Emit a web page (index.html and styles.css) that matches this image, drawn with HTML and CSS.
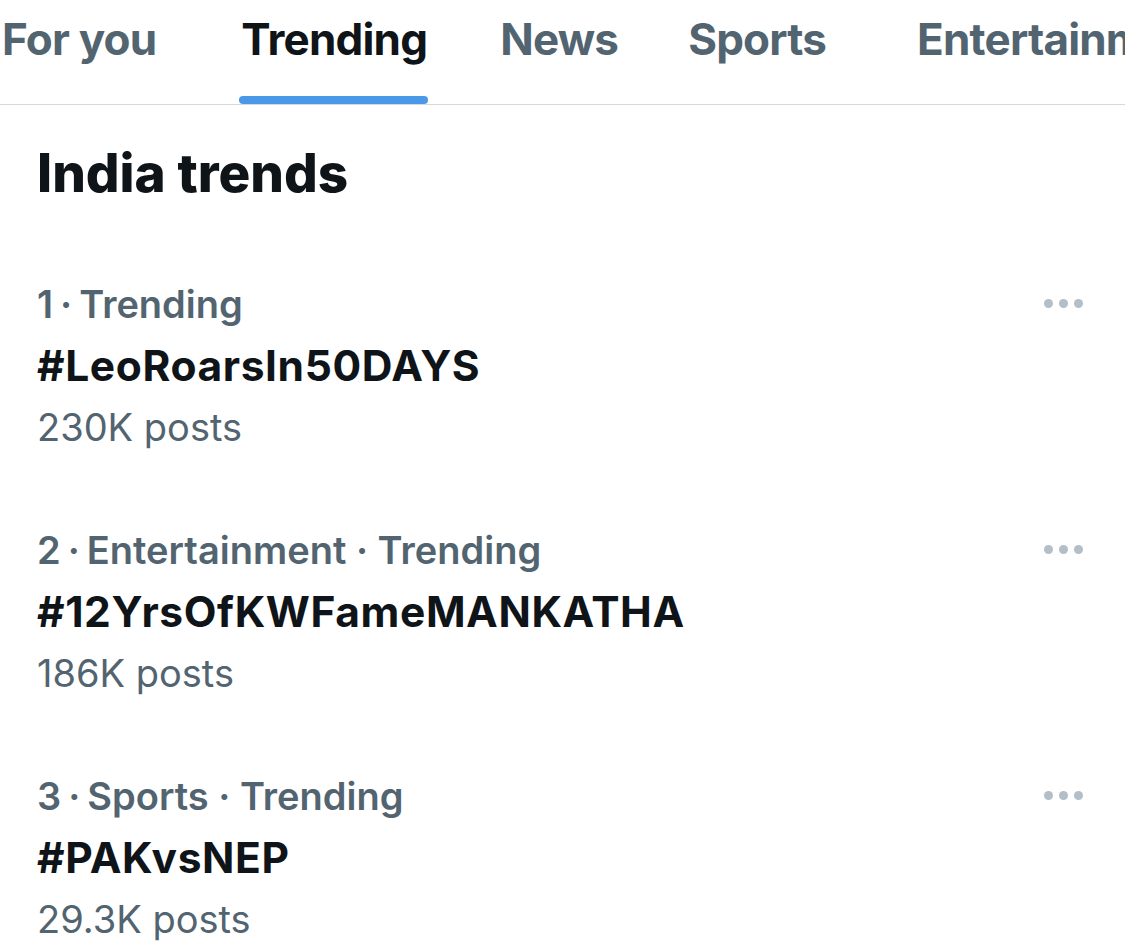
FILE: index.html
```html
<!DOCTYPE html>
<html lang="en">
<head>
<meta charset="utf-8">
<title>Trending</title>
<link rel="stylesheet" href="styles.css">
</head>
<body>
<nav class="tabs">
  <div class="tab tab-foryou">For you</div>
  <div class="tab tab-active">Trending<span class="indicator"></span></div>
  <div class="tab tab-news">News</div>
  <div class="tab tab-sports">Sports</div>
  <div class="tab tab-ent">Entertainment</div>
</nav>
<main class="content">
  <h1 class="heading">India trends</h1>
  <section class="trend">
    <div class="trend-text">
      <div class="meta">1<span class="num-sep">·</span>Trending</div>
      <div class="title">#LeoRoarsIn50DAYS</div>
      <div class="count">230K posts</div>
    </div>
    <div class="more"><span></span><span></span><span></span></div>
  </section>
  <section class="trend">
    <div class="trend-text">
      <div class="meta">2<span class="num-sep">·</span>Entertainment · Trending</div>
      <div class="title">#12YrsOfKWFameMANKATHA</div>
      <div class="count">186K posts</div>
    </div>
    <div class="more"><span></span><span></span><span></span></div>
  </section>
  <section class="trend">
    <div class="trend-text">
      <div class="meta">3<span class="num-sep">·</span>Sports · Trending</div>
      <div class="title">#PAKvsNEP</div>
      <div class="count">29.3K posts</div>
    </div>
    <div class="more"><span></span><span></span><span></span></div>
  </section>
</main>
</body>
</html>
```

FILE: styles.css
```css
html, body {
  margin: 0;
  padding: 0;
  background: #ffffff;
}
body {
  width: 1125px;
  height: 949px;
  overflow: hidden;
  font-family: Inter, "Noto Sans", "Liberation Sans", sans-serif;
  color: #0f1419;
}
.tabs {
  display: flex;
  height: 104px;
  border-bottom: 1.5px solid #d4d9dc;
  padding-left: 2px;
  white-space: nowrap;
  overflow: hidden;
}
.tab {
  position: relative;
  flex-shrink: 0;
  font-size: 44px;
  font-weight: 700;
  line-height: 56px;
  padding-top: 11px;
  color: #536471;
  letter-spacing: -0.8px;
}
.tab-active {
  color: #0f1419;
  margin-left: 85px;
}
.tab-news { margin-left: 73px; }
.tab-sports { margin-left: 70px; }
.tab-ent { margin-left: 91px; }
.indicator {
  position: absolute;
  left: -2px;
  right: -1px;
  top: 96px;
  height: 8px;
  border-radius: 4px;
  background: #4a99e9;
}
.content {
  padding: 0 0 0 37px;
}
.heading {
  margin: 37px 0 0 0;
  font-size: 53px;
  line-height: 62px;
  font-weight: 800;
  letter-spacing: 0;
}
.trend {
  display: flex;
  justify-content: space-between;
  align-items: flex-start;
  padding-right: 42px;
}
.trend:first-of-type {
  margin-top: 77px;
}
.trend + .trend {
  margin-top: 77px;
}
.meta {
  font-size: 38px;
  line-height: 46px;
  font-weight: 600;
  color: #536471;
  letter-spacing: 0;
}
.num-sep {
  display: inline-block;
  margin: 0 7px;
}
.title {
  margin-top: 14px;
  font-size: 42.5px;
  line-height: 50px;
  font-weight: 700;
  color: #0f1419;
  letter-spacing: 0.6px;
}
.count {
  margin-top: 13px;
  font-size: 38px;
  line-height: 46px;
  font-weight: 400;
  color: #536471;
}
.more {
  display: flex;
  gap: 6px;
  margin-top: 18px;
}
.more span {
  width: 9px;
  height: 9px;
  border-radius: 50%;
  background: #b3bfc8;
}
```
